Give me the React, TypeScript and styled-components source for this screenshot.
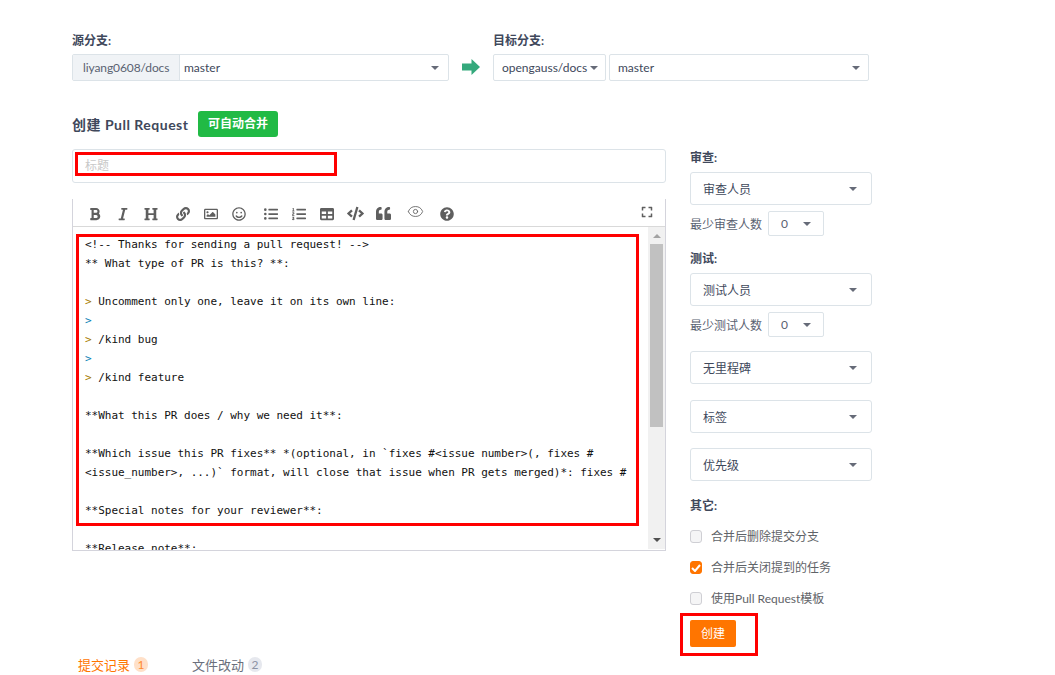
import React from "react";
import styled, { createGlobalStyle } from "styled-components";
import {
  FaBold, FaItalic, FaHeading, FaLink, FaRegImage, FaRegSmile, FaListUl, FaListOl,
  FaTable, FaCode, FaQuoteLeft, FaQuestionCircle, FaExpand,
} from "react-icons/fa";
import { Eye } from "lucide-react";

const Global = createGlobalStyle`
  html, body { margin: 0; padding: 0; background: #fff; }
  * { box-sizing: border-box; }
`;

const sans = `Lato, "Noto Sans CJK SC", sans-serif`;

const Page = styled.div`
  position: relative;
  width: 1055px;
  height: 675px;
  overflow: hidden;
  padding: 33px 0 0 72px;
  font-family: ${sans};
  font-size: 12px;
  color: #40485b;
`;

const BranchRow = styled.div`
  display: flex;
  align-items: flex-end;
`;

const BranchColumn = styled.div`
  display: flex;
  flex-direction: column;
  gap: 6px;
`;

const FieldLabel = styled.div`
  height: 15px;
  line-height: 15px;
  font-weight: 700;
  font-size: 12px;
  color: #40485b;
`;

const InputGroup = styled.div`
  display: flex;
  width: 377px;
  height: 27px;
  border: 1px solid #dce3e8;
  border-radius: 2px;
  background: #fff;
`;

const Addon = styled.div`
  width: 107px;
  flex: none;
  padding-left: 10px;
  line-height: 25px;
  letter-spacing: -0.1px;
  background: #f0f3f6;
  border-right: 1px solid #dce3e8;
  color: #5a6272;
`;

const GroupValue = styled.div`
  flex: 1;
  padding: 0 9px 0 4px;
  display: flex;
  align-items: center;
  justify-content: space-between;
`;

const Caret = styled.span`
  width: 0;
  height: 0;
  flex: none;
  border-left: 4px solid transparent;
  border-right: 4px solid transparent;
  border-top: 4px solid #666b78;
`;

const ArrowBox = styled.div`
  width: 44px;
  height: 27px;
  display: flex;
  align-items: center;
  justify-content: center;
  padding-bottom: 2px;
`;

const TargetRow = styled.div`
  display: flex;
  gap: 3px;
`;

const BranchSelect = styled.div<{ $w: number; $pad: number; $right: number }>`
  width: ${(p) => p.$w}px;
  height: 27px;
  border: 1px solid #dce3e8;
  border-radius: 2px;
  padding: 0 ${(p) => p.$right}px 0 ${(p) => p.$pad}px;
  display: flex;
  align-items: center;
  justify-content: space-between;
`;

const TitleRow = styled.div`
  display: flex;
  align-items: center;
  gap: 10px;
  height: 26px;
  margin-top: 30px;
`;

const Heading = styled.div`
  width: 116px;
  flex: none;
  font-size: 14px;
  font-weight: 700;
  letter-spacing: 0.5px;
  white-space: nowrap;
  color: #40485b;
`;

const MergeTag = styled.div`
  width: 80px;
  height: 26px;
  line-height: 26px;
  text-align: center;
  background: #21ba45;
  color: #fff;
  font-size: 12px;
  font-weight: 700;
  border-radius: 3px;
`;

const Main = styled.div`
  display: grid;
  grid-template-columns: 594px 182px;
  column-gap: 24px;
  margin-top: 12px;
`;

const TitleInput = styled.div`
  height: 34px;
  padding-left: 12px;
  line-height: 32px;
  border: 1px solid #dce3e8;
  border-radius: 3px;
  color: #c8c8c8;
`;

const Editor = styled.div`
  margin-top: 16px;
  height: 352px;
  border: 1px solid #d4d4dc;
  border-top: none;
  display: flex;
  flex-direction: column;
`;

const Toolbar = styled.div`
  height: 28px;
  flex: none;
  padding: 2px 4px 0 8px;
  border-bottom: 1px solid #d9d9d9;
  display: flex;
  align-items: center;
  color: #5f5f5f;
`;

const ToolButton = styled.span<{ $gap?: boolean; $raised?: boolean; $size?: number }>`
  width: 28px;
  height: 25px;
  flex: none;
  display: flex;
  align-items: center;
  justify-content: center;
  margin-left: ${(p) => (p.$gap ? 4 : 0)}px;
  padding-bottom: ${(p) => (p.$raised ? 4 : 0)}px;
  font-size: ${(p) => p.$size ?? 14}px;
`;

const ExpandButton = styled(ToolButton)`
  margin-left: auto;
  font-size: 12px;
`;

const EditorBody = styled.div`
  flex: 1;
  min-height: 0;
  display: flex;
`;

const Code = styled.pre`
  flex: 1;
  margin: 0;
  padding: 8px 0 0 12px;
  overflow: hidden;
  font-family: "DejaVu Sans Mono", "Liberation Mono", monospace;
  font-size: 11px;
  letter-spacing: -0.02px;
  line-height: 19px;
  color: #111;
`;

const QuoteMark = styled.span<{ $blue?: boolean }>`
  color: ${(p) => (p.$blue ? "#0b7fb5" : "#a67a00")};
`;

const ScrollTrack = styled.div`
  width: 17px;
  flex: none;
  background: #f1f1f1;
  display: flex;
  flex-direction: column;
  align-items: center;
  margin-bottom: 1px;
`;

const ScrollUp = styled.span`
  margin-top: 7px;
  width: 0;
  height: 0;
  border-left: 4px solid transparent;
  border-right: 4px solid transparent;
  border-bottom: 4px solid #a3a3a3;
`;

const ScrollThumb = styled.div`
  width: 13px;
  height: 183px;
  margin-top: 6px;
  background: #c1c1c1;
`;

const ScrollDown = styled.span`
  margin-top: auto;
  margin-bottom: 7px;
  width: 0;
  height: 0;
  border-left: 4px solid transparent;
  border-right: 4px solid transparent;
  border-top: 4px solid #505050;
`;

const Side = styled.div`
  display: flex;
  flex-direction: column;
`;

const SideLabel = styled.div<{ $top?: number }>`
  height: 16px;
  line-height: 16px;
  padding-top: 1px;
  margin-top: ${(p) => p.$top ?? 0}px;
  font-weight: 700;
  color: #40485b;
`;

const SideSelect = styled.div<{ $top: number }>`
  height: 33px;
  margin-top: ${(p) => p.$top}px;
  padding: 0 14px 0 12px;
  border: 1px solid #dce3e8;
  border-radius: 3px;
  display: flex;
  align-items: center;
  justify-content: space-between;
`;

const MinRow = styled.div`
  height: 25px;
  margin-top: 6px;
  display: flex;
  align-items: center;
  gap: 6px;
  color: #5a6272;
`;

const MiniSelect = styled.div`
  width: 56px;
  height: 25px;
  padding: 0 12px 0 12px;
  border: 1px solid #dce3e8;
  border-radius: 2px;
  display: flex;
  align-items: center;
  justify-content: space-between;
`;

const CheckList = styled.div`
  margin-top: 8px;
  display: flex;
  flex-direction: column;
`;

const CheckRow = styled.div`
  height: 31px;
  padding-bottom: 2px;
  display: flex;
  align-items: center;
  gap: 9px;
  color: #5f6368;
`;

const CheckBox = styled.span<{ $on?: boolean }>`
  width: 12px;
  height: 13px;
  flex: none;
  margin-top: 2px;
  border-radius: 3px;
  border: 1px solid ${(p) => (p.$on ? "#ff7500" : "#cfcfd4")};
  background: ${(p) => (p.$on ? "#ff7500" : "#f5f5f6")};
  display: flex;
  align-items: center;
  justify-content: center;
`;

const CreateButton = styled.div`
  width: 46px;
  height: 27px;
  margin-top: 6px;
  line-height: 27px;
  text-align: center;
  background: #ff7500;
  color: #fff;
  border-radius: 2px;
`;

const Tabs = styled.div`
  display: flex;
  height: 17px;
  margin-top: 9px;
  padding-left: 6px;
  gap: 44px;
  font-size: 13px;
`;

const Tab = styled.div<{ $active?: boolean }>`
  display: flex;
  align-items: center;
  gap: 4px;
  color: ${(p) => (p.$active ? "#ff7500" : "#6a6f7c")};
`;

const Badge = styled.span<{ $active?: boolean }>`
  width: 14px;
  height: 15px;
  line-height: 15px;
  text-align: center;
  border-radius: 7px;
  font-size: 12px;
  background: ${(p) => (p.$active ? "#ffe0c8" : "#e6e8ee")};
  color: ${(p) => (p.$active ? "#ff8a30" : "#8c92a4")};
`;

const Annotation = styled.div<{ $l: number; $t: number; $w: number; $h: number }>`
  position: absolute;
  left: ${(p) => p.$l}px;
  top: ${(p) => p.$t}px;
  width: ${(p) => p.$w}px;
  height: ${(p) => p.$h}px;
  border: 3px solid #ff0000;
  pointer-events: none;
`;

const tools = [
  { node: <FaBold /> }, { node: <FaItalic /> }, { node: <FaHeading /> },
  { node: <FaLink />, gap: true }, { node: <FaRegImage /> }, { node: <FaRegSmile /> },
  { node: <FaListUl />, gap: true }, { node: <FaListOl /> }, { node: <FaTable /> },
  { node: <FaCode />, size: 17 }, { node: <FaQuoteLeft />, size: 15 },
  { node: <Eye size={17} strokeWidth={1.2} />, gap: true, raised: true },
  { node: <FaQuestionCircle />, gap: true },
];

const Side2 = ({ top, children }: { top: number; children: React.ReactNode }) => (
  <SideSelect $top={top}>
    <span>{children}</span>
    <Caret />
  </SideSelect>
);

export default function App() {
  return (
    <Page>
      <Global />
      <BranchRow>
        <BranchColumn>
          <FieldLabel>源分支:</FieldLabel>
          <InputGroup>
            <Addon>liyang0608/docs</Addon>
            <GroupValue>
              <span>master</span>
              <Caret />
            </GroupValue>
          </InputGroup>
        </BranchColumn>
        <ArrowBox>
          <svg width="18" height="16" viewBox="0 0 18 16">
            <path d="M0 4.5h9.5V0L18 8l-8.5 8v-4.5H0z" fill="#34a97c" />
          </svg>
        </ArrowBox>
        <BranchColumn>
          <FieldLabel>目标分支:</FieldLabel>
          <TargetRow>
            <BranchSelect $w={113} $pad={8} $right={7}>
              <span>opengauss/docs</span>
              <Caret />
            </BranchSelect>
            <BranchSelect $w={260} $pad={8} $right={8}>
              <span>master</span>
              <Caret />
            </BranchSelect>
          </TargetRow>
        </BranchColumn>
      </BranchRow>

      <TitleRow>
        <Heading>创建 Pull Request</Heading>
        <MergeTag>可自动合并</MergeTag>
      </TitleRow>

      <Main>
        <div>
          <TitleInput>标题</TitleInput>
          <Editor>
            <Toolbar>
              {tools.map(({ node, gap, raised, size }, i) => (
                <ToolButton key={i} $gap={gap} $raised={raised} $size={size}>
                  {node}
                </ToolButton>
              ))}
              <ExpandButton $raised>
                <FaExpand />
              </ExpandButton>
            </Toolbar>
            <EditorBody>
              <Code>
                {`<!-- Thanks for sending a pull request! -->
** What type of PR is this? **:

`}
                <QuoteMark>&gt;</QuoteMark>
                {` Uncomment only one, leave it on its own line:
`}
                <QuoteMark $blue>&gt;</QuoteMark>
                {`
`}
                <QuoteMark>&gt;</QuoteMark>
                {` /kind bug
`}
                <QuoteMark $blue>&gt;</QuoteMark>
                {`
`}
                <QuoteMark>&gt;</QuoteMark>
                {` /kind feature

**What this PR does / why we need it**:

**Which issue this PR fixes** *(optional, in \`fixes #<issue number>(, fixes #
<issue_number>, ...)\` format, will close that issue when PR gets merged)*: fixes #

**Special notes for your reviewer**:

**Release note**:`}
              </Code>
              <ScrollTrack>
                <ScrollUp />
                <ScrollThumb />
                <ScrollDown />
              </ScrollTrack>
            </EditorBody>
          </Editor>
        </div>

        <Side>
          <SideLabel>审查:</SideLabel>
          <Side2 top={7}>审查人员</Side2>
          <MinRow>
            最少审查人数
            <MiniSelect>
              <span>0</span>
              <Caret />
            </MiniSelect>
          </MinRow>
          <SideLabel $top={14}>测试:</SideLabel>
          <Side2 top={7}>测试人员</Side2>
          <MinRow>
            最少测试人数
            <MiniSelect>
              <span>0</span>
              <Caret />
            </MiniSelect>
          </MinRow>
          <Side2 top={14}>无里程碑</Side2>
          <Side2 top={16}>标签</Side2>
          <Side2 top={15}>优先级</Side2>
          <SideLabel $top={16}>其它:</SideLabel>
          <CheckList>
            <CheckRow>
              <CheckBox />
              合并后删除提交分支
            </CheckRow>
            <CheckRow>
              <CheckBox $on>
                <svg width="10" height="8" viewBox="0 0 10 8">
                  <path d="M1 4l3 3 5-6" fill="none" stroke="#fff" strokeWidth="2" />
                </svg>
              </CheckBox>
              合并后关闭提到的任务
            </CheckRow>
            <CheckRow>
              <CheckBox />
              使用Pull Request模板
            </CheckRow>
          </CheckList>
          <CreateButton>创建</CreateButton>
        </Side>
      </Main>

      <Tabs>
        <Tab $active>
          提交记录<Badge $active>1</Badge>
        </Tab>
        <Tab>
          文件改动<Badge>2</Badge>
        </Tab>
      </Tabs>

      <Annotation $l={75} $t={152} $w={262} $h={24} />
      <Annotation $l={76} $t={234} $w={563} $h={292} />
      <Annotation $l={680} $t={613} $w={78} $h={43} />
    </Page>
  );
}
